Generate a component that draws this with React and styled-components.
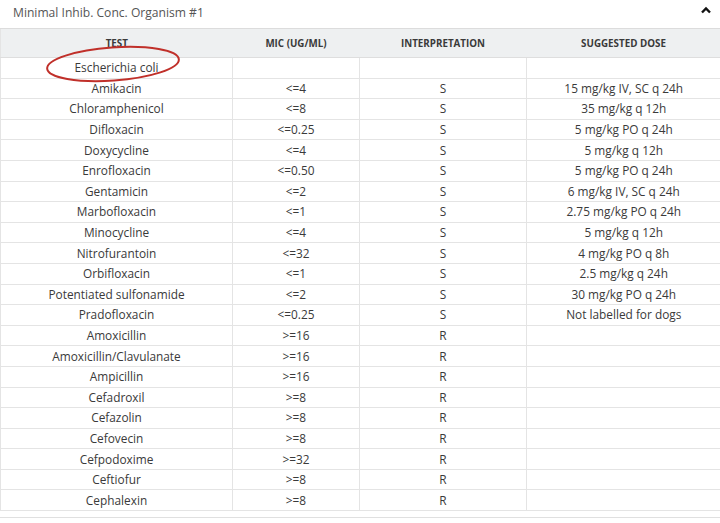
import styled, { createGlobalStyle } from 'styled-components';

const GlobalStyle = createGlobalStyle`
  body {
    margin: 0;
    background: #fff;
    font-family: "Open Sans", "Liberation Sans", sans-serif;
  }
`;

const Panel = styled.div`
  width: 720px;
  height: 523px;
  background: #fff;
  overflow: hidden;
`;

const TitleBar = styled.div`
  height: 29px;
  display: flex;
  align-items: center;
  justify-content: space-between;
  padding: 0 8px 4px 13px;
  box-sizing: border-box;
  border-bottom: 1px solid #dcdcdc;
  font-size: 12.1px;
  color: #555;
`;

const Chevron = styled.svg`
  width: 12px;
  height: 10px;
  margin-top: -4px;
`;

const Table = styled.table`
  width: 720px;
  border-collapse: collapse;
  table-layout: fixed;
  border-left: 1px solid #e4e4e4;
`;

const HeadCell = styled.th`
  height: 28px;
  padding: 0;
  background: #eef0f1;
  font-size: 9.8px;
  font-weight: 700;
  color: #3a3a3a;
  text-transform: uppercase;
  text-align: center;
  border-bottom: 1px solid #dedede;
`;

const Row = styled.tr`
  height: 20.6px;
`;

const Cell = styled.td`
  padding: 0;
  font-size: 11.85px;
  line-height: 19px;
  color: #3a3a3a;
  text-align: center;
  border-bottom: 1px solid #e4e4e4;
  border-right: ${p => (p.$last ? 'none' : '1px solid #e4e4e4')};
  white-space: nowrap;
`;

const OrganismCell = styled(Cell)`
  position: relative;
`;

// red hand-drawn ring around the organism name
const Ellipse = styled.svg`
  position: absolute;
  left: 44px;
  top: -15px;
  width: 140px;
  height: 44px;
  overflow: visible;
  pointer-events: none;
`;

const Footer = styled.div`
  margin-top: 6px;
  border-top: 1px solid #e0e0e0;
`;

const drugs = [
  ['Amikacin', '<=4', 'S', '15 mg/kg IV, SC q 24h'],
  ['Chloramphenicol', '<=8', 'S', '35 mg/kg q 12h'],
  ['Difloxacin', '<=0.25', 'S', '5 mg/kg PO q 24h'],
  ['Doxycycline', '<=4', 'S', '5 mg/kg q 12h'],
  ['Enrofloxacin', '<=0.50', 'S', '5 mg/kg PO q 24h'],
  ['Gentamicin', '<=2', 'S', '6 mg/kg IV, SC q 24h'],
  ['Marbofloxacin', '<=1', 'S', '2.75 mg/kg PO q 24h'],
  ['Minocycline', '<=4', 'S', '5 mg/kg q 12h'],
  ['Nitrofurantoin', '<=32', 'S', '4 mg/kg PO q 8h'],
  ['Orbifloxacin', '<=1', 'S', '2.5 mg/kg q 24h'],
  ['Potentiated sulfonamide', '<=2', 'S', '30 mg/kg PO q 24h'],
  ['Pradofloxacin', '<=0.25', 'S', 'Not labelled for dogs'],
  ['Amoxicillin', '>=16', 'R', ''],
  ['Amoxicillin/Clavulanate', '>=16', 'R', ''],
  ['Ampicillin', '>=16', 'R', ''],
  ['Cefadroxil', '>=8', 'R', ''],
  ['Cefazolin', '>=8', 'R', ''],
  ['Cefovecin', '>=8', 'R', ''],
  ['Cefpodoxime', '>=32', 'R', ''],
  ['Ceftiofur', '>=8', 'R', ''],
  ['Cephalexin', '>=8', 'R', ''],
];

export default function App() {
  return (
    <Panel>
      <GlobalStyle />
      <TitleBar>
        <span>Minimal Inhib. Conc. Organism #1</span>
        <Chevron viewBox="0 0 12 10">
          <path d="M2 7.5 L6 3.5 L10 7.5" fill="none" stroke="#111" strokeWidth="2.4" />
        </Chevron>
      </TitleBar>
      <Table>
        <colgroup>
          <col style={{ width: 232 }} />
          <col style={{ width: 127 }} />
          <col style={{ width: 167 }} />
          <col style={{ width: 194 }} />
        </colgroup>
        <thead>
          <tr>
            <HeadCell>Test</HeadCell>
            <HeadCell>MIC (ug/ml)</HeadCell>
            <HeadCell>Interpretation</HeadCell>
            <HeadCell>Suggested Dose</HeadCell>
          </tr>
        </thead>
        <tbody>
          <Row>
            <OrganismCell>
              Escherichia coli
              <Ellipse viewBox="0 0 140 44">
                <ellipse
                  cx="68"
                  cy="21"
                  rx="66"
                  ry="16.5"
                  fill="none"
                  stroke="#c0302a"
                  strokeWidth="2"
                  transform="rotate(-4 68 21)"
                />
              </Ellipse>
            </OrganismCell>
            <Cell />
            <Cell />
            <Cell $last />
          </Row>
          {drugs.map(([name, mic, interp, dose]) => (
            <Row key={name}>
              <Cell>{name}</Cell>
              <Cell>{mic}</Cell>
              <Cell>{interp}</Cell>
              <Cell $last>{dose}</Cell>
            </Row>
          ))}
        </tbody>
      </Table>
      <Footer />
    </Panel>
  );
}
